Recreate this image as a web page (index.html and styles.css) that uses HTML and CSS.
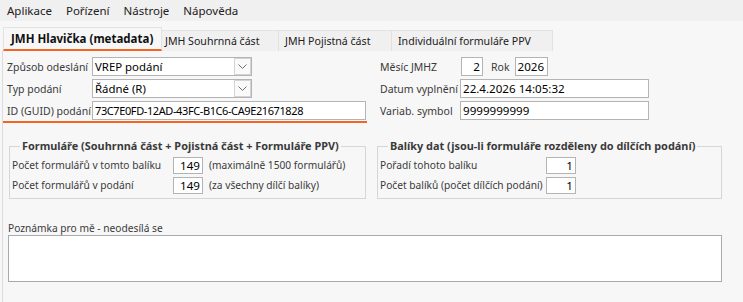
FILE: index.html
```html
<!DOCTYPE html>
<html lang="cs">
<head>
<meta charset="utf-8">
<title>JMH</title>
<link rel="stylesheet" href="styles.css">
</head>
<body>
<div class="menubar">
  <span class="menu-item">Aplikace</span>
  <span class="menu-item">Pořízení</span>
  <span class="menu-item">Nástroje</span>
  <span class="menu-item">Nápověda</span>
</div>
<div class="tabs">
  <div class="tab active">JMH Hlavička (metadata)</div>
  <div class="tab t2">JMH Souhrnná část</div>
  <div class="tab t3">JMH Pojistná část</div>
  <div class="tab t4">Individuální formuláře PPV</div>
</div>
<div class="panel">
  <div class="top">
    <div class="left-block">
      <div class="row">
        <span class="lbl">Způsob odeslání</span>
        <div class="select"><span class="val">VREP podání</span><span class="btn"><svg width="9" height="5" viewBox="0 0 9 5"><polyline points="0.5,0.5 4.5,4.5 8.5,0.5" fill="none" stroke="#707070" stroke-width="1"/></svg></span></div>
      </div>
      <div class="row">
        <span class="lbl">Typ podání</span>
        <div class="select"><span class="val">Řádné (R)</span><span class="btn"><svg width="9" height="5" viewBox="0 0 9 5"><polyline points="0.5,0.5 4.5,4.5 8.5,0.5" fill="none" stroke="#707070" stroke-width="1"/></svg></span></div>
      </div>
      <div class="row">
        <span class="lbl">ID (GUID) podání</span>
        <div class="input guid">73C7E0FD-12AD-43FC-B1C6-CA9E21671828</div>
      </div>
    </div>
    <div class="right-block">
      <div class="row">
        <span class="lbl r">Měsíc JMHZ</span>
        <div class="input num month">2</div>
        <span class="lbl rok">Rok</span>
        <div class="input year">2026</div>
      </div>
      <div class="row">
        <span class="lbl r">Datum vyplnění</span>
        <div class="input wide">22.4.2026 14:05:32</div>
      </div>
      <div class="row">
        <span class="lbl r">Variab. symbol</span>
        <div class="input wide">9999999999</div>
      </div>
    </div>
  </div>
  <div class="groups">
    <fieldset class="group g1">
      <legend>Formuláře (Souhrnná část + Pojistná část + Formuláře PPV)</legend>
      <div class="grow">
        <span class="glbl g1l">Počet formulářů v tomto balíku</span>
        <div class="input num small">149</div>
        <span class="hint">(maximálně 1500 formulářů)</span>
      </div>
      <div class="grow">
        <span class="glbl g1l">Počet formulářů v podání</span>
        <div class="input num small">149</div>
        <span class="hint">(za všechny dílčí balíky)</span>
      </div>
    </fieldset>
    <fieldset class="group g2">
      <legend>Balíky dat (jsou-li formuláře rozděleny do dílčích podání)</legend>
      <div class="grow">
        <span class="glbl g2l">Pořadí tohoto balíku</span>
        <div class="input num small">1</div>
      </div>
      <div class="grow">
        <span class="glbl g2l">Počet balíků (počet dílčích podání)</span>
        <div class="input num small">1</div>
      </div>
    </fieldset>
  </div>
  <div class="note">
    <div class="note-lbl">Poznámka pro mě - neodesílá se</div>
    <div class="textarea"></div>
  </div>
</div>
</body>
</html>
```
FILE: styles.css
```css
* { box-sizing: border-box; }
html, body { margin: 0; padding: 0; }
body {
  width: 743px;
  height: 302px;
  overflow: hidden;
  background: #f7f7f7;
  font-family: "Noto Sans", "Liberation Sans", sans-serif;
  font-size: 10.2px;
  color: #3a3a3a;
}
.menubar {
  height: 21px;
  background: #f0f0f0;
  display: flex;
  align-items: center;
  padding-left: 7px;
  gap: 14px;
  color: #202020;
  font-size: 11.5px;
}
.tabs {
  display: flex;
  align-items: flex-end;
  height: 30px;
  padding-left: 3px;
  font-size: 10.6px;
}
.tab {
  height: 21px;
  background: #f0f0f0;
  border: 1px solid #e2e2e2;
  border-bottom: none;
  display: flex;
  align-items: center;
  padding-left: 6px;
  color: #202020;
}
.tab.active {
  height: 24px;
  width: 159px;
  background: #f7f7f7;
  font-weight: bold;
  font-size: 11.5px;
  padding-left: 7px;
  border-bottom: 2px solid #f26522;
  color: #101010;
}
.tab.t2 { width: 117px; padding-left: 3px; border-left: none; }
.tab.t3 { width: 113px; border-left: none; }
.tab.t4 { width: 161px; border-left: none; }
.panel {
  margin-left: 2px;
  border-left: 1px solid #dcdcdc;
  height: 251px;
}
.top {
  display: flex;
  padding-top: 6px;
}
.left-block {
  width: 364px;
  padding-left: 4px;
  padding-bottom: 1px;
  border-bottom: 2px solid #f26522;
  display: flex;
  flex-direction: column;
  gap: 3px;
}
.right-block {
  margin-left: 13px;
  display: flex;
  flex-direction: column;
  gap: 3px;
}
.row {
  display: flex;
  align-items: center;
  height: 19px;
}
.lbl { width: 85px; flex: none; white-space: nowrap; font-size: 10.5px; }
.lbl.r { width: 80px; }
.lbl.rok { width: auto; margin: 0 5px 0 8px; }
.select {
  width: 160px;
  height: 19px;
  background: #fff;
  border: 1px solid #b4b4b4;
  display: flex;
  align-items: center;
  justify-content: space-between;
  color: #000;
  font-size: 11.4px;
  padding-left: 2px;
}
.btn {
  width: 17px;
  height: 17px;
  border: 1px solid #d4d4d4;
  background: #fafafa;
  display: flex;
  align-items: center;
  justify-content: center;
}
.input {
  height: 19px;
  background: #fff;
  border: 1px solid #b4b4b4;
  color: #000;
  font-size: 11.6px;
  display: flex;
  align-items: center;
  padding: 0 2px;
  white-space: nowrap;
}
.input.num { justify-content: flex-end; }
.guid { width: 274px; font-size: 11px; letter-spacing: -0.4px; }
.month { width: 22px; margin-left: 1px; }
.year { width: 33px; }
.wide { width: 189px; }
.groups {
  display: flex;
  margin-top: 16px;
}
.group {
  margin: 0;
  border: 1px solid #d6d6d6;
  padding: 4px 2px 5px 2px;
  display: flex;
  flex-direction: column;
  gap: 4px;
}
.group legend {
  font-weight: bold;
  padding: 0 2px;
  margin-left: 8px;
  color: #3a3a3a;
  font-size: 10.9px;
  line-height: 14px;
}
.g1 { margin-left: 6px; width: 357px; }
.g2 { margin-left: 11px; width: 345px; }
.grow {
  display: flex;
  align-items: center;
  height: 16px;
}
.glbl { flex: none; white-space: nowrap; }
.g1l { width: 161px; }
.g2l { width: 166px; }
.input.small { width: 30px; height: 17px; }
.hint { margin-left: 6px; white-space: nowrap; }
.note {
  margin-top: 22px;
  padding-left: 5px;
}
.note-lbl { height: 14px; line-height: 14px; }
.textarea {
  width: 714px;
  height: 47px;
  background: #fff;
  border: 1px solid #a9a9b0;
}
```
